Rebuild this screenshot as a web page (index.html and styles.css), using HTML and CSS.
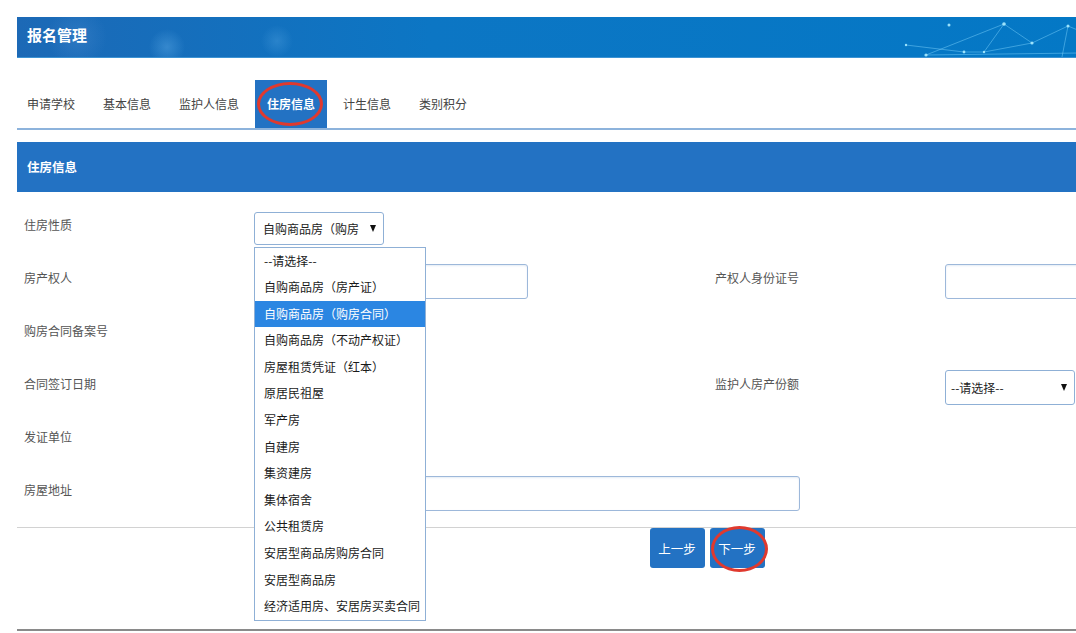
FILE: index.html
```html
<!doctype html>
<html>

<head>
    <meta charset="utf-8">
    <meta name="viewport" content="width=device-width, initial-scale=1">
    <title>报名管理 - 住房信息</title>
    <link rel="stylesheet" href="styles.css">
</head>

<body>
    <div class="page">
        <!-- 顶部标题栏 -->
        <div class="banner">
            <h1>报名管理</h1>
            <svg class="net" width="200" height="40" viewBox="0 0 200 40">
                <g stroke="rgba(130,215,255,0.45)" stroke-width="1" fill="none">
                    <path d="M46 38 L124 7 L152 26 L188 9 L200 14" />
                    <path d="M26 28 L84 35 L104 35 L152 26" />
                    <path d="M124 7 L104 35" />
                    <path d="M188 9 L182 40" />
                    <path d="M46 38 L200 36" />
                </g>
                <g fill="rgba(170,235,255,0.9)">
                    <circle cx="69" cy="8" r="1.5" />
                    <circle cx="124" cy="7" r="1.8" />
                    <circle cx="188" cy="9" r="1.5" />
                    <circle cx="26" cy="28" r="1.2" />
                    <circle cx="46" cy="38" r="1.6" />
                    <circle cx="84" cy="35" r="1.4" />
                    <circle cx="104" cy="35" r="1.2" />
                    <circle cx="152" cy="26" r="1.6" />
                </g>
            </svg>
        </div>

        <!-- 步骤标签 -->
        <ul class="tabs">
            <li>申请学校</li>
            <li>基本信息</li>
            <li>监护人信息</li>
            <li class="active">住房信息<span class="ring tab-ring"></span></li>
            <li>计生信息</li>
            <li>类别积分</li>
        </ul>

        <div class="panel-head">住房信息</div>

        <div class="form">
            <label>住房性质</label>
            <div class="field">
                <div class="select-wrap">
                    <div class="select"><span class="select-text">自购商品房（购房</span><i class="caret"></i></div>
                    <ul class="options">
                        <li>--请选择--</li>
                        <li>自购商品房（房产证）</li>
                        <li class="hover">自购商品房（购房合同）</li>
                        <li>自购商品房（不动产权证）</li>
                        <li>房屋租赁凭证（红本）</li>
                        <li>原居民祖屋</li>
                        <li>军产房</li>
                        <li>自建房</li>
                        <li>集资建房</li>
                        <li>集体宿舍</li>
                        <li>公共租赁房</li>
                        <li>安居型商品房购房合同</li>
                        <li>安居型商品房</li>
                        <li>经济适用房、安居房买卖合同</li>
                    </ul>
                </div>
            </div>
            <span></span><span></span>

            <label>房产权人</label>
            <div class="field"><input type="text" class="ipt" /></div>
            <label>产权人身份证号</label>
            <div class="field"><input type="text" class="ipt" /></div>

            <label>购房合同备案号</label>
            <div class="field"><input type="text" class="ipt short" /></div>
            <span></span><span></span>

            <label>合同签订日期</label>
            <div class="field"><input type="text" class="ipt short" /></div>
            <label>监护人房产份额</label>
            <div class="field">
                <div class="select wide"><span class="select-text">--请选择--</span><i class="caret"></i></div>
            </div>

            <label>发证单位</label>
            <div class="field"><input type="text" class="ipt short" /></div>
            <span></span><span></span>

            <label>房屋地址</label>
            <div class="field span3"><input type="text" class="ipt addr" /></div>
        </div>

        <div class="actions">
            <button class="btn">上一步</button>
            <button class="btn">下一步<span class="ring btn-ring"></span></button>
        </div>
    </div>
</body>

</html>
```

FILE: styles.css
```css
body {
    margin: 0;
    overflow: hidden;
    background: #fff;
    font-family: "Noto Sans CJK SC", "Noto Sans", sans-serif;
    font-size: 12px;
    color: #555;
}
.page {
    width: 1380px;
    margin: 17px 0 0 17px;
}

/* 标题栏 */
.banner {
    position: relative;
    box-sizing: border-box;
    height: 41px;
    display: flex;
    align-items: center;
    padding: 0 0 5px 10px;
    overflow: hidden;
    background:
        radial-gradient(circle at 150px 30px, rgba(110, 185, 240, 0.35), transparent 18px),
        radial-gradient(circle at 260px 24px, rgba(110, 185, 240, 0.25), transparent 16px),
        radial-gradient(circle at 60px 20px, rgba(90, 150, 215, 0.3), transparent 30px),
        linear-gradient(90deg, #1c69b6 0%, #0c76c4 30%, #0079c6 100%);
    border-bottom: 1px solid #3d93d3;
}
.banner h1 {
    position: relative;
    margin: 0;
    font-size: 15px;
    font-weight: bold;
    color: #fff;
}
.banner .net {
    position: absolute;
    left: 863px;
    top: 0;
}

/* 标签 */
.tabs {
    display: flex;
    list-style: none;
    margin: 22px 0 0;
    padding: 0;
    border-bottom: 2px solid #8db3dc;
}
.tabs li {
    position: relative;
    height: 48px;
    line-height: 47px;
    padding: 0 12px;
    margin-right: 4px;
    color: #444;
}
.tabs li:first-child {
    padding-left: 10px;
}
.tabs li.active {
    background-color: #2372c3;
    color: #fff;
    font-weight: bold;
}

/* 红色圈注 */
.ring {
    position: absolute;
    border: 3px solid #e0392e;
    border-radius: 50%;
    box-sizing: border-box;
    pointer-events: none;
}
.tab-ring {
    left: 2px;
    top: 2px;
    width: 66px;
    height: 44px;
}
.btn-ring {
    left: 1px;
    top: -2px;
    width: 57px;
    height: 46px;
}

.panel-head {
    margin-top: 12px;
    height: 50px;
    line-height: 50px;
    padding-left: 10px;
    background-color: #2372c3;
    color: #fff;
    font-weight: bold;
    font-size: 12.5px;
}

/* 表单 */
.form {
    display: grid;
    grid-template-columns: 237px 454px 237px 1fr;
    grid-auto-rows: 53px;
    align-items: center;
    padding: 6px 0 11px;
    border-bottom: 1px solid #d2d2d2;
}
.form label {
    padding-left: 7px;
}
.field {
    display: flex;
    align-items: center;
    padding-top: 7px;
}
.span3 {
    grid-column: span 3;
}
.ipt {
    box-sizing: border-box;
    width: 274px;
    height: 35px;
    padding: 0 6px;
    border: 1px solid #9db8da;
    border-radius: 3px;
    box-shadow: inset 0 1px 2px #e4ecf5;
    background-color: white;
    font: inherit;
}
.ipt.short {
    width: 160px;
}
.ipt.addr {
    width: 546px;
}

.select-wrap {
    position: relative;
}
.select {
    box-sizing: border-box;
    display: flex;
    align-items: center;
    width: 130px;
    height: 33px;
    padding: 0 7px 0 8px;
    border: 1px solid #8fb0d6;
    border-radius: 3px;
    background-color: white;
    color: #222;
}
.select.wide {
    height: 35px;
    padding-left: 5px;
}
.select-text {
    flex: 1;
    overflow: hidden;
    white-space: nowrap;
}
.caret {
    width: 0;
    height: 0;
    margin-left: 6px;
    border-left: 3px solid transparent;
    border-right: 3px solid transparent;
    border-top: 7px solid #111;
}

/* 展开的下拉选项 */
.options {
    position: absolute;
    z-index: 10;
    left: 0;
    top: 35px;
    width: 172px;
    box-sizing: border-box;
    list-style: none;
    margin: 0;
    padding: 0;
    border: 1px solid #8fb0d6;
    background-color: #fff;
}
.options li {
    height: 26.6px;
    line-height: 26.6px;
    padding-left: 9px;
    color: #1a1a1a;
    white-space: nowrap;
}
.options li.hover {
    background-color: #2b86e2;
    color: #fff;
}

/* 按钮 */
.actions {
    display: flex;
    justify-content: center;
    gap: 5px;
    height: 101px;
    border-bottom: 2px solid #8a8a8a;
}
.btn {
    position: relative;
    width: 55px;
    height: 40px;
    border: 0;
    border-radius: 3px;
    background-color: #2372c3;
    color: #fff;
    font-family: inherit;
    font-size: 12.5px;
    cursor: pointer;
}
```
